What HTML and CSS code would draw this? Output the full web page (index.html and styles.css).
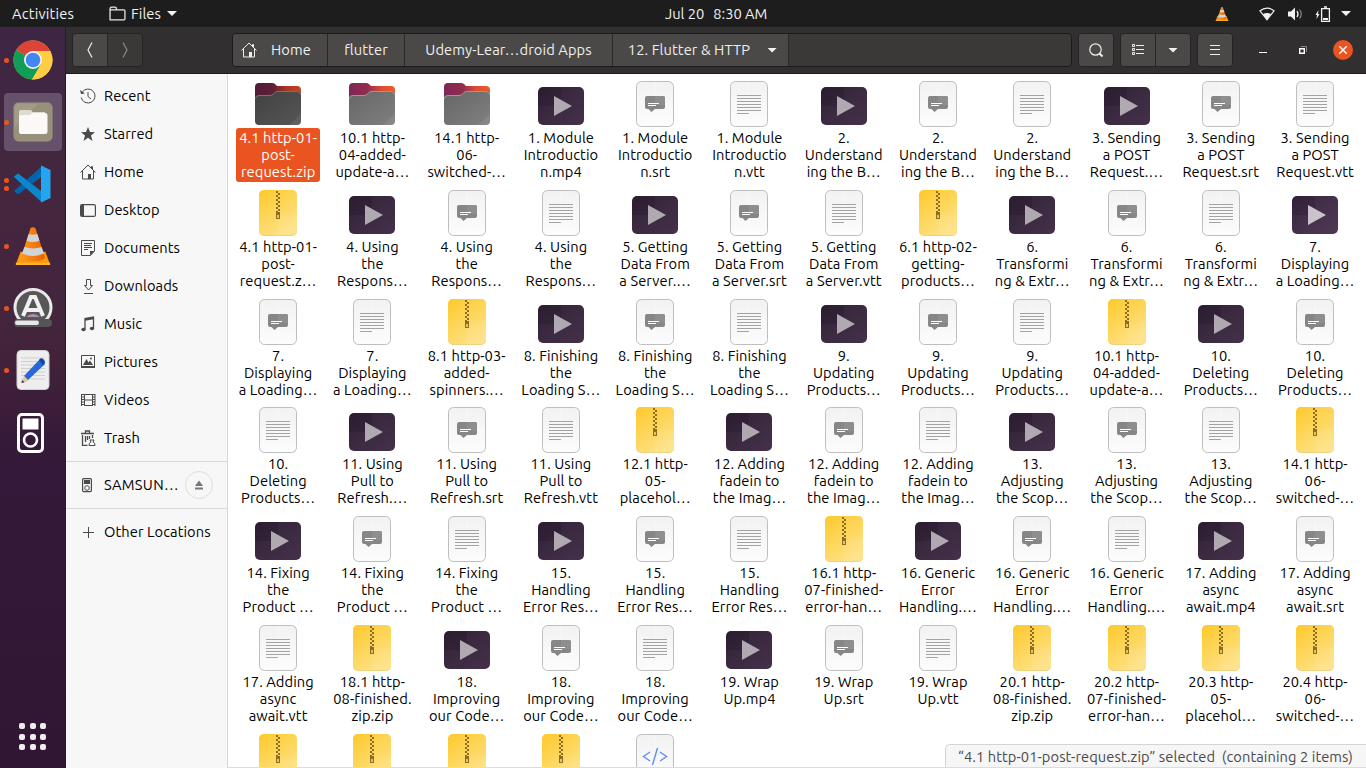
FILE: index.html
```html
<!DOCTYPE html>
<html lang="en">
<head>
<meta charset="utf-8">
<title>12. Flutter &amp; HTTP</title>
<link rel="stylesheet" href="styles.css">
</head>
<body>
<svg class="defs" width="0" height="0" aria-hidden="true">
  <defs>
    <linearGradient id="gZip" x1="0" y1="0" x2=".6" y2="1"><stop offset="0" stop-color="#fdc92b"/><stop offset="1" stop-color="#fee184"/></linearGradient>
    <linearGradient id="gVid" x1="0" y1="0" x2="1" y2="1"><stop offset="0" stop-color="#2b1d30"/><stop offset="1" stop-color="#3f2b45"/></linearGradient>
    <linearGradient id="gDoc" x1="0" y1="0" x2="0" y2="1"><stop offset="0" stop-color="#f2f2f2"/><stop offset="1" stop-color="#fcfcfc"/></linearGradient>
    <linearGradient id="gBack" x1="0" y1="0" x2="1" y2="0"><stop offset="0" stop-color="#7d2856"/><stop offset=".4" stop-color="#922c4e"/><stop offset=".7" stop-color="#dc4c30"/><stop offset="1" stop-color="#f05a28"/></linearGradient>
    <linearGradient id="gFront" x1="0" y1="0" x2="1" y2="1"><stop offset="0" stop-color="#666"/><stop offset="1" stop-color="#808080"/></linearGradient>
    <linearGradient id="gBackS" x1="0" y1="0" x2="1" y2="0"><stop offset="0" stop-color="#501c3b"/><stop offset=".4" stop-color="#641e36"/><stop offset=".7" stop-color="#a83a22"/><stop offset="1" stop-color="#c54620"/></linearGradient>
    <linearGradient id="gFrontS" x1="0" y1="0" x2="1" y2="1"><stop offset="0" stop-color="#414141"/><stop offset="1" stop-color="#565656"/></linearGradient>
    <linearGradient id="gCone" x1="0" y1="0" x2="1" y2="0"><stop offset="0" stop-color="#ff9a1f"/><stop offset="1" stop-color="#e96000"/></linearGradient>
  </defs>
  <symbol id="folder" viewBox="0 0 48 48">
    <path d="M1 7q0-4 4-4h13q2 0 3 1l2 2h20q4 0 4 4v12H1z" fill="url(#gBack)"/>
    <path d="M1 19q0-4 4-4h11q2 0 3-1l2-2q1-1 3-1h19q4 0 4 4v26q0 4-4 4H5q-4 0-4-4z" fill="url(#gFront)"/>
    <path d="M1.500 19q0-3.500 3.500-3.500h11q2 0 3.500-1.500l1.500-1.500q1-1 3-1h19q3.500 0 3.500 3.500" fill="none" stroke="#999"/>
    <path d="M47 34v7q0 4-4 4H35z" fill="#fff" opacity=".07"/>
  </symbol>
  <symbol id="folder-selected" viewBox="0 0 48 48">
    <path d="M1 7q0-4 4-4h13q2 0 3 1l2 2h20q4 0 4 4v12H1z" fill="url(#gBackS)"/>
    <path d="M1 19q0-4 4-4h11q2 0 3-1l2-2q1-1 3-1h19q4 0 4 4v26q0 4-4 4H5q-4 0-4-4z" fill="url(#gFrontS)"/>
    <path d="M1.500 19q0-3.500 3.500-3.500h11q2 0 3.500-1.500l1.500-1.500q1-1 3-1h19q3.500 0 3.500 3.500" fill="none" stroke="#737373"/>
    <path d="M47 34v7q0 4-4 4H35z" fill="#fff" opacity=".07"/>
  </symbol>
  <symbol id="video" viewBox="0 0 48 48">
    <rect x="1" y="7" width="46" height="38" rx="5" fill="url(#gVid)"/>
    <path d="M24 7h19q4 0 4 4v15H24zM1 26h46v14q0 5-5 5H6q-5 0-5-5z" fill="#fff" opacity=".03"/>
    <path d="M17 16v20l18-10z" fill="#b0a9b2"/>
  </symbol>
  <symbol id="page" viewBox="0 0 48 48">
    <rect x="5.500" y="1.500" width="37" height="45" rx="5" fill="url(#gDoc)" stroke="#bebebe"/>
    <path d="M24 2v44M6 24h36" stroke="#fff" opacity=".35"/>
  </symbol>
  <symbol id="srt" viewBox="0 0 48 48">
    <use href="#page"/>
    <path d="M16 16h16q2 0 2 2v9q0 2-2 2h-8l-3.500 3-3-3H16q-2 0-2-2v-9q0-2 2-2z" fill="#868686"/>
    <path d="M24 16h8q2 0 2 2v7H24z" fill="#8e8e8e"/>
    <path d="M17 23.500h11M17 25.500h8" stroke="#fff"/>
  </symbol>
  <symbol id="text" viewBox="0 0 48 48">
    <use href="#page"/>
    <path d="M12 15.500h24M12 18.500h24M12 21.500h24M12 24.500h24M12 27.500h24M12 30.500h24M12 33.500h12" stroke="#a3a3a3"/>
  </symbol>
  <symbol id="code" viewBox="0 0 48 48">
    <use href="#page"/>
    <path d="M19 19l-6.500 4.500 6.500 4.500M29 19l6.500 4.500-6.500 4.500M26.500 15l-5 17" fill="none" stroke="#6690f4" stroke-width="1.500"/>
  </symbol>
  <symbol id="zip" viewBox="0 0 48 48">
    <rect x="5" y="1" width="38" height="46" rx="5" fill="#dfb84a" opacity=".7"/>
    <rect x="5" y="1" width="38" height="45.300" rx="5" fill="url(#gZip)"/>
    <path d="M24 24h19v17q0 5-5 5H24z" fill="#fff" opacity=".07"/>
    <path d="M23 2v22" stroke="#8c6f24" stroke-width="2" stroke-dasharray="2 2"/>
    <path d="M25 4v20" stroke="#8c6f24" stroke-width="2" stroke-dasharray="2 2"/>
    <path d="M22 23h4v7h-4zM23.200 26v3h1.600v-3z" fill="#8c6f24" fill-rule="evenodd"/>
  </symbol>
  <symbol id="home" viewBox="0 0 16 16">
    <path d="M.5 8.500L8 1l7.500 7.500M2.500 7v8h11V7M11.500 4.500v-2h1v3M8.500 15v-4.500h2V15" fill="none" stroke="currentColor"/><path d="M8 10h3v5H8z" fill="currentColor"/>
  </symbol>
  <symbol id="cone" viewBox="0 0 40 42">
    <path d="M7 27h26l5 13.500H2z" fill="#ff9810"/><path d="M2 38.500h36v2.500H2z" fill="#ffb42b"/>
    <path d="M17.500 2q2.500-1.500 5 0l10 31q-1 4-12.500 4T7.500 33z" fill="url(#gCone)"/>
    <path d="M15.500 8.500q4.500 1.500 9 0l2.300 7q-6.800 2.500-13.600 0zM11 22q9 3 18 0l2.500 7q-11.500 5-23 0z" fill="#d0d4d6"/>
  </symbol>
</svg>

<header class="topbar">
  <span class="activities">Activities</span>
  <svg class="app-icon" viewBox="0 0 16 16"><path d="M1 14V3.500Q1 2 2.500 2h3Q7 2 7 3.500v1h7q1 0 1 1V13q0 1-1 1H1.500zM7 4.500H1.500" fill="none" stroke="#e8e8e8" stroke-width="1.200"/></svg>
  <span class="app-name">Files</span>
  <i class="caret"></i>
  <span class="clock"><span>Jul 20</span><span>8:30 AM</span></span>
  <div class="tray">
    <svg class="tray-vlc"><use href="#cone"/></svg>
    <svg class="tray-wifi" viewBox="0 0 16 14"><path d="M1 3.800Q8-1.500 15 3.800L8 12.800z" fill="none" stroke="#f2f2f2" stroke-width="1.200"/><path d="M4 7q4-2.200 8 0l-4 6z" fill="#f2f2f2"/></svg>
    <svg class="tray-vol" viewBox="0 0 16 14"><path d="M0 4.500h3L7 .500v13L3 9.500H0z" fill="#f2f2f2"/><path d="M9 4q2 3 0 6" fill="none" stroke="#f2f2f2" stroke-width="1.300"/><path d="M11.500 2.500q3.500 4.500 0 9" fill="none" stroke="#888" stroke-width="1.200"/></svg>
    <svg class="tray-bat" viewBox="0 0 16 16"><path d="M3.500 4L.500 9H2L1.500 13l3-5H3z" fill="#f2f2f2"/><path d="M6.600 2.600h7.800v12.800H6.600zM9 1h3" fill="none" stroke="#f2f2f2" stroke-width="1.300"/><path d="M8 12h5v2H8z" fill="#f2f2f2"/></svg>
    <i class="caret"></i>
  </div>
</header>

<div class="desktop">
  <nav class="dock">
    <div class="dock-item one">
      <svg viewBox="0 0 40 40"><circle cx="20" cy="20" r="19.500" fill="#ffcd42"/><path d="M20 20L3.200 10A19.500 19.500 0 0 1 37.200 11H20z" fill="#dc4437"/><path d="M20 20L3.200 10A19.500 19.500 0 0 0 19 39.500L28 25z" fill="#109d58"/><path d="M20 11h17.200A19.500 19.500 0 0 1 19 39.500L28 24z" fill="#ffcd42"/><circle cx="20" cy="20" r="9" fill="#f2f2f2"/><circle cx="20" cy="20" r="7.300" fill="#4486f4"/></svg>
    </div>
    <div class="dock-item one active">
      <svg viewBox="0 0 40 40"><rect x=".500" y=".500" width="39" height="39" rx="5" fill="#9c937d"/><rect x="2" y="2" width="36" height="36" rx="3" fill="#a39b86"/><path d="M2 25L25 2h13v36H2z" fill="#8f8772" opacity=".55"/><path d="M6 10q0-2 2-2h9q2 0 2.500 2H32v10H6z" fill="#dfdbcd"/><path d="M6 15q0-2 2-2h9l2-2h13q2.500 0 2.500 2.500V30q0 2-2.500 2H8q-2 0-2-2z" fill="#faf9f7"/></svg>
    </div>
    <div class="dock-item two">
      <svg viewBox="0 0 40 40"><path d="M1 12.500l4-3L31 29v9z" fill="#0879bf"/><path d="M1 27l4 3.500L31 11V1.500L28 3z" fill="#0065a9"/><path d="M1 13l4-3.500 24 19v10z" fill="#0e86cd"/><path d="M28 1.500l9.500 4.500v28L28 38.500z" fill="#25a5ef"/></svg>
    </div>
    <div class="dock-item one"><svg><use href="#cone"/></svg></div>
    <div class="dock-item one">
      <svg viewBox="0 0 40 40"><circle cx="20" cy="19.500" r="18" fill="#575757" stroke="#e9e9e9" stroke-width="3"/><path d="M10 28l8-19h4l8 19M12 22h16" fill="none" stroke="#f1f1f1" stroke-width="4"/><path d="M13 29q7-6 14 0z" fill="#b38bb0"/><rect x="1" y="31" width="38" height="8" rx="4" fill="#555"/><rect x="2" y="32.500" width="24" height="4.500" rx="2.200" fill="#e8e8e8"/></svg>
    </div>
    <div class="dock-item one">
      <svg viewBox="0 0 40 40"><rect x="4" y=".500" width="32" height="39" rx="4" fill="#eee" stroke="#d0d0d0"/><path d="M8 8h24M8 11.500h24M8 15h24M8 18.500h24M8 22h24M8 25.500h24M8 29h24" stroke="#cfcfcf"/><path d="M11 26L27 9l5 5-17 16z" fill="#2867d8"/><path d="M26 10l2-2q4 1 4 5l-2 2z" fill="#1645a4"/><path d="M11 26l4 5-6 2z" fill="#f0c296"/><path d="M9 30l2.500 2.200L8.500 33z" fill="#333"/></svg>
    </div>
    <div class="dock-item player">
      <svg viewBox="0 0 40 40"><rect x="5.500" y="1.500" width="24" height="37" rx="3.500" fill="none" stroke="#fff" stroke-width="3"/><path d="M9.500 5.500h16v11h-16z" fill="#fff"/><circle cx="17.500" cy="27" r="6.500" fill="none" stroke="#fff" stroke-width="2.600"/></svg>
    </div>
    <div class="apps"><i></i><i></i><i></i><i></i><i></i><i></i><i></i><i></i><i></i></div>
  </nav>

  <main class="window">
    <div class="headerbar">
      <div class="btn-group nav-buttons">
        <span class="btn"><svg viewBox="0 0 16 16"><path d="M10 .500L6 8l4 7.500" fill="none" stroke="#eee" stroke-width="1.200"/></svg></span>
        <span class="btn off"><svg viewBox="0 0 16 16"><path d="M6 .500L10 8l-4 7.500" fill="none" stroke="#8b8b8b" stroke-width="1.200"/></svg></span>
      </div>
      <div class="pathbar">
        <span class="crumb crumb-home"><svg><use href="#home"/></svg>Home</span>
        <span class="crumb crumb-flutter">flutter</span>
        <span class="crumb crumb-udemy">Udemy-Lear…droid Apps</span>
        <span class="crumb crumb-current">12. Flutter &amp; HTTP<i class="caret"></i></span>
      </div>
      <div class="btn-group"><span class="btn"><svg viewBox="0 0 16 16"><circle cx="7.500" cy="7.500" r="5.700" fill="none" stroke="#eee" stroke-width="1.200"/><path d="M11.500 11.500l3 3" stroke="#eee" stroke-width="2"/></svg></span></div>
      <div class="btn-group">
        <span class="btn"><svg viewBox="0 0 16 16"><path d="M2.500 2.500h2v2h-2zM2.500 6.500h2v2h-2zM2.500 10.500h2v2h-2zM6 3.500h8M6 7.500h8M6 11.500h8" fill="none" stroke="#eee"/></svg></span>
        <span class="btn"><i class="caret"></i></span>
      </div>
      <div class="btn-group"><span class="btn"><svg viewBox="0 0 16 16"><path d="M3 3.500h10M3 7.500h10M3 12.500h10" stroke="#eee"/></svg></span></div>
      <div class="controls">
        <svg viewBox="0 0 16 16"><path d="M4 10.500h8" stroke="#fff"/></svg>
        <svg viewBox="0 0 16 16"><path d="M4.700 6.700h4.600v4.600H4.700z" fill="none" stroke="#fff" stroke-width="1.400"/><path d="M6 4.500h5.500V10" fill="none" stroke="#8a8a8a"/></svg>
        <span class="close"><svg viewBox="0 0 16 16"><path d="M4.300 4.300l7.400 7.400M11.700 4.300l-7.400 7.400" stroke="#fff" stroke-width="1.500"/></svg></span>
      </div>
    </div>

    <div class="content">
      <aside class="sidebar">
        <div class="place"><svg viewBox="0 0 16 16"><path d="M2.300 4A7 7 0 1 1 1.200 9.500M8 4v4.500l3 2.500" fill="none" stroke="#4a4a4a"/><path d="M0 2l1 4 4-.5z" fill="#4a4a4a"/></svg>Recent</div>
        <div class="place"><svg viewBox="0 0 16 16"><path d="M8 1l2 5 5 .2-4 3.300L12.500 15 8 11.800 3.500 15 5 9.500 1 6.200 6 6z" fill="#4a4a4a"/></svg>Starred</div>
        <div class="place"><svg><use href="#home"/></svg>Home</div>
        <div class="place"><svg viewBox="0 0 16 16"><rect x=".600" y="2.600" width="14.800" height="11.800" rx="1.500" fill="none" stroke="#4a4a4a" stroke-width="1.200"/><path d="M1 3h3v11H1z" fill="#4a4a4a"/></svg>Desktop</div>
        <div class="place"><svg viewBox="0 0 16 16"><path d="M1.500.500h13V11L10.500 15.500h-9zM4 3.500h8M4 5.500h7M4 7.500h8M4 9.500h4" fill="none" stroke="#4a4a4a"/><path d="M10 11h4.500L10 15.500z" fill="#4a4a4a"/></svg>Documents</div>
        <div class="place"><svg viewBox="0 0 16 16"><path d="M6.500 1.500h4v6h2l-4 4.500-4-4.500h2zM4 15.500h9" fill="none" stroke="#4a4a4a"/></svg>Downloads</div>
        <div class="place"><svg viewBox="0 0 16 16"><path d="M5 13V2.500L13.500 1v11M5 4l8.500-1.500" fill="none" stroke="#4a4a4a" stroke-width="1.300"/><ellipse cx="3.500" cy="13.500" rx="2.200" ry="1.700" fill="#4a4a4a"/><ellipse cx="12" cy="12.500" rx="2.200" ry="1.700" fill="#4a4a4a"/></svg>Music</div>
        <div class="place"><svg viewBox="0 0 16 16"><path d="M1.500 1.500h13v12h-13z" fill="none" stroke="#4a4a4a"/><path d="M1 12h14v2H1zM3 11l3.500-6 2 3.500L10 6.500l3 4.500z" fill="#4a4a4a"/><circle cx="11" cy="4.500" r="1" fill="#4a4a4a"/></svg>Pictures</div>
        <div class="place"><svg viewBox="0 0 16 16"><path d="M1.500 2v12M4.500 2v12M12.500 2v12M15 2v12M4.500 2.500h8M4.500 8h8M4.500 13.500h8" fill="none" stroke="#4a4a4a"/><path d="M3 2v12M14 2v12" stroke="#4a4a4a" stroke-width="2" stroke-dasharray="1 1.500"/></svg>Videos</div>
        <div class="place"><svg viewBox="0 0 16 16"><path d="M1 3.500h13M5.500 3V1h4v2M2.500 5v10.500h5M12.500 5v3M5.500 6v6M7.500 6v4M9.500 6v3" fill="none" stroke="#4a4a4a" stroke-width="1.300"/><path d="M10 10h4l-1 2q2.500 1 2 3.500H9q-.5-2.500 2-3.500z" fill="none" stroke="#4a4a4a"/></svg>Trash</div>
        <div class="place device"><svg viewBox="0 0 16 16"><rect x="2.600" y="1.600" width="8.800" height="13" rx="1" fill="none" stroke="#4a4a4a" stroke-width="1.200"/><path d="M4 3h6v4H4z" fill="#4a4a4a"/><circle cx="7" cy="11" r="2.300" fill="none" stroke="#4a4a4a"/></svg><span>SAMSUN…</span>
          <span class="eject"><svg viewBox="0 0 16 16"><path d="M8 3.500l4 5.500H4zM4 10.500h8v2H4z" fill="#777"/></svg></span></div>
        <div class="place other"><svg viewBox="0 0 16 16"><path d="M3 8.500h11M8.500 3v11" stroke="#4a4a4a"/></svg>Other Locations</div>
      </aside>
      <section class="files">
        <div class="grid" id="grid"></div>
        <div class="status"><span>“4.1 http-01-post-request.zip” selected</span><span>(containing 2 items)</span></div>
      </section>
    </div>
  </main>
</div>
<script src="files.js"></script>
</body>
</html>
```
FILE: styles.css
```css
* { box-sizing: border-box; }
body { margin: 0; width: 1366px; height: 768px; overflow: hidden; display: flex; flex-direction: column; font: 14.667px/17px Ubuntu, "Noto Sans", sans-serif; letter-spacing: .08px; color: #000; background: #fff; }
svg { display: block; flex: none; }
.defs { position: absolute; }
.caret { display: block; flex: none; width: 10px; height: 5px; background: #f2f2f2; clip-path: polygon(0 0, 100% 0, 50% 100%); }

.topbar { position: relative; flex: none; height: 27px; display: flex; align-items: center; padding-left: 12px; background: #1d1d1d; color: #f2f2f2; }
.activities { width: 97px; padding-bottom: 1px; letter-spacing: .2px; }
.app-icon { width: 17px; height: 17px; margin-right: 5px; }
.app-name { width: 36px; padding-bottom: 1px; }
.clock { margin-left: 488px; padding-bottom: 1px; display: flex; gap: 9px; letter-spacing: 0; white-space: nowrap; }
.tray { margin-left: auto; margin-right: 15px; display: flex; align-items: center; }
.tray-vlc { width: 14px; height: 16px; margin-right: 30px; }
.tray-wifi { width: 16px; height: 14px; margin-right: 13px; }
.tray-vol { width: 16px; height: 14px; margin-right: 11px; }
.tray-bat { width: 16px; height: 16px; margin-right: 10px; }

.desktop { flex: 1; min-height: 0; display: flex; }
.dock { flex: none; width: 66px; display: flex; flex-direction: column; align-items: center; gap: 4px; padding: 4px 0 18px; background: linear-gradient(#3f2545, #43273f 18%, #43263d 38%, #42223a 45%, #35193a 57%, #311633); border-right: 1px solid #2b1730; }
.dock-item { position: relative; flex: none; width: 58px; height: 58px; display: flex; align-items: center; justify-content: center; border-radius: 4px; }
.dock-item > svg { width: 40px; height: 40px; }
.dock-item.active { background: #655169; }
.dock-item.player { padding-top: 2px; }
.one::before, .two::before { content: ""; position: absolute; left: 0; top: 27px; width: 5px; height: 5px; border-radius: 50%; background: #e95420; }
.two::before { top: 23px; box-shadow: 0 8px #e95420; }
.apps { margin-top: auto; display: grid; grid-template-columns: repeat(3, 6px); gap: 4.500px; }
.apps i { width: 6px; height: 6px; border-radius: 2px; background: #f0edf0; }

.window { flex: 1; min-width: 0; display: flex; flex-direction: column; background: #322f30; }
.headerbar { flex: none; height: 47px; display: flex; align-items: center; gap: 6px; padding-left: 6px; border-bottom: 1px solid #1b191a; background: #322f30; color: #eee; }
.btn-group { display: flex; height: 34px; border: 1px solid #252324; border-radius: 4px; overflow: hidden; }
.btn { width: 34px; display: flex; align-items: center; justify-content: center; background: #4a4947; }
.btn + .btn { width: 35px; border-left: 1px solid #272526; }
.btn.off { background: #3a3938; }
.btn svg { width: 16px; height: 16px; }
.nav-buttons { margin-right: 83px; }
.pathbar { width: 840px; height: 34px; display: flex; border: 1px solid #1c1a1b; border-radius: 4px; background: #3a3937; overflow: hidden; }
.crumb { display: flex; align-items: center; justify-content: center; border-right: 1px solid #292728; background: #4a4947; letter-spacing: .1px; line-height: 16px; white-space: nowrap; }
.crumb svg { width: 16px; height: 16px; margin-right: 14px; }
.crumb-home { width: 95px; justify-content: flex-start; padding-left: 8px; }
.crumb-flutter { width: 77px; }
.crumb-udemy { width: 208px; }
.crumb-current { width: 176px; gap: 17px; padding-left: 4px; }
.controls { margin-left: 16px; display: flex; align-items: center; gap: 24px; }
.controls svg { width: 16px; height: 16px; }
.close { width: 20px; height: 20px; margin-left: -2px; display: flex; align-items: center; justify-content: center; border-radius: 50%; background: #e95420; }

.content { flex: 1; min-height: 0; display: flex; background: #fff; }
.sidebar { flex: none; width: 162px; padding-top: 3px; border-right: 1px solid #d8d8d8; background: #f7f7f7; line-height: 16px; }
.place { display: flex; align-items: center; height: 38px; padding-left: 14px; gap: 8px; white-space: nowrap; }
.place svg { width: 16px; height: 16px; color: #4a4a4a; }
.device { height: 48px; margin-top: 4px; gap: 7px; border: solid #d8d8d8; border-width: 1px 0; letter-spacing: .3px; }
.device > svg { margin-right: 1px; }
.device > span:first-of-type { width: 74px; }
.eject { flex: none; width: 28px; height: 28px; margin-left: auto; margin-right: 14px; display: flex; align-items: center; justify-content: center; border: 1px solid #dedede; border-radius: 50%; }
.other { margin-top: 4px; }

.files { position: relative; flex: 1; min-width: 0; overflow: hidden; border-bottom: 1px solid #dcdcdc; }
.grid { display: grid; grid-template-columns: repeat(12, 94.270px); grid-auto-rows: 108.800px; padding: 6px 0 0 3px; }
.file { display: flex; flex-direction: column; align-items: center; }
.file svg { width: 48px; height: 48px; }
.label { height: 54px; width: 84px; padding-top: 1px; border-radius: 3px; text-align: center; white-space: pre; display: flex; flex-direction: column; align-items: center; }
.selected .label { background: #e95420; color: #fff; }
.hover svg { filter: brightness(1.150); }
.status { position: absolute; right: 0; bottom: -1px; height: 24px; width: 421px; padding: 3px 13px 0 12px; display: flex; justify-content: space-between; border: 1px solid #d4d4d4; border-width: 1px 0 0 1px; border-radius: 5px 0 0 0; background: #f6f6f6; color: #4a4a4a; white-space: nowrap; }
```
FILE: files.js
```js
// Each entry: icon id, then the label with its line breaks.
const files = `folder-selected|4.1 http-01-|post-|request.zip
folder|10.1 http-|04-added-|update-a…
folder|14.1 http-|06-|switched-…
video|1. Module|Introductio|n.mp4
srt|1. Module|Introductio|n.srt
text|1. Module|Introductio|n.vtt
video|2.|Understand|ing the B…
srt|2.|Understand|ing the B…
text|2.|Understand|ing the B…
video|3. Sending|a POST|Request.…
srt|3. Sending|a POST|Request.srt
text|3. Sending|a POST|Request.vtt
zip|4.1 http-01-|post-|request.z…
video|4. Using|the|Respons…
srt|4. Using|the|Respons…
text|4. Using|the|Respons…
video|5. Getting|Data From|a Server.…
srt|5. Getting|Data From|a Server.srt
text|5. Getting|Data From|a Server.vtt
zip|6.1 http-02-|getting-|products…
video|6.|Transformi|ng & Extr…
srt|6.|Transformi|ng & Extr…
text|6.|Transformi|ng & Extr…
video|7.|Displaying|a Loading…
srt|7.|Displaying|a Loading…
text|7.|Displaying|a Loading…
zip|8.1 http-03-|added-|spinners.…
video|8. Finishing|the|Loading S…
srt|8. Finishing|the|Loading S…
text|8. Finishing|the|Loading S…
video|9.|Updating|Products…
srt|9.|Updating|Products…
text|9.|Updating|Products…
zip|10.1 http-|04-added-|update-a…
video|10.|Deleting|Products…
srt|10.|Deleting|Products…
text|10.|Deleting|Products…
video|11. Using|Pull to|Refresh.…
srt|11. Using|Pull to|Refresh.srt
text|11. Using|Pull to|Refresh.vtt
zip|12.1 http-|05-|placehol…
video|12. Adding|fadein to|the Imag…
srt|12. Adding|fadein to|the Imag…
text|12. Adding|fadein to|the Imag…
video|13.|Adjusting|the Scop…
srt|13.|Adjusting|the Scop…
text|13.|Adjusting|the Scop…
zip|14.1 http-|06-|switched-…
video|14. Fixing|the|Product …
srt|14. Fixing|the|Product …
text|14. Fixing|the|Product …
video|15.|Handling|Error Res…
srt|15.|Handling|Error Res…
text|15.|Handling|Error Res…
zip|16.1 http-|07-finished-|error-han…
video|16. Generic|Error|Handling.…
srt|16. Generic|Error|Handling.…
text|16. Generic|Error|Handling.…
video|17. Adding|async|await.mp4
srt|17. Adding|async|await.srt
text|17. Adding|async|await.vtt
zip|18.1 http-|08-finished.|zip.zip
video|18.|Improving|our Code…
srt|18.|Improving|our Code…
text|18.|Improving|our Code…
video|19. Wrap|Up.mp4
srt|19. Wrap|Up.srt
text|19. Wrap|Up.vtt
zip|20.1 http-|08-finished.|zip.zip
zip|20.2 http-|07-finished-|error-han…
zip|20.3 http-|05-|placehol…
zip|20.4 http-|06-|switched-…
zip
zip
zip
zip
code`.split("\n");

document.getElementById("grid").innerHTML = files.map((entry, i) => {
  const [icon, ...lines] = entry.split("|");
  const state = i === 0 ? " selected" : i === 23 ? " hover" : "";
  const text = lines.map(l => `<span>${l.replace("&", "&amp;")}</span>`).join("");
  const label = lines.length ? `<div class="label">${text}</div>` : "";
  return `<div class="file${state}"><svg><use href="#${icon}"/></svg>${label}</div>`;
}).join("");
```
